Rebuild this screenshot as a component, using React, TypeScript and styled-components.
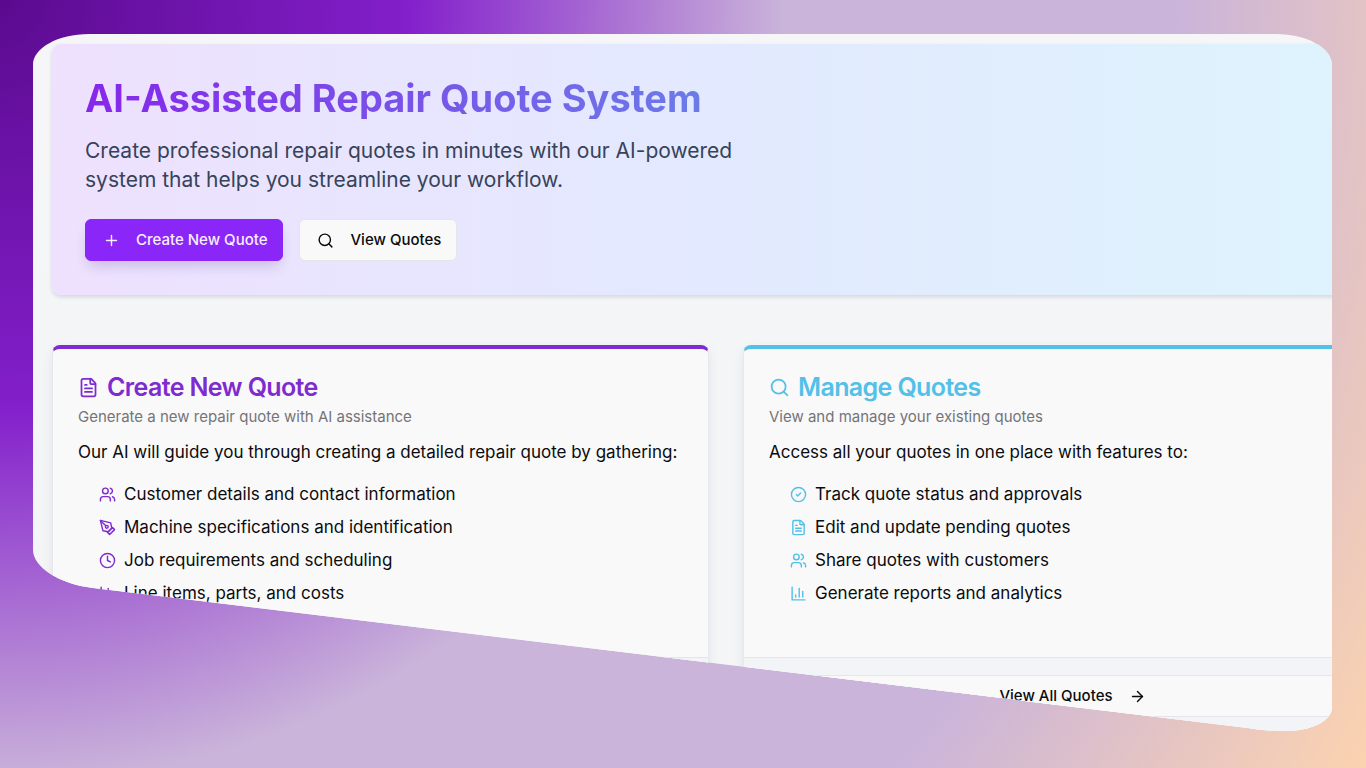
import React from "react";
import styled, { createGlobalStyle } from "styled-components";
import { ArrowRight, CircleCheck, Clock, FileText, Plus, Search, Users } from "lucide-react";

const violet = "#7e2bd0";
const sky = "#52c0e8";

const GlobalStyle = createGlobalStyle`
  *, *::before, *::after { box-sizing: border-box; }
  body {
    margin: 0;
    font-family: Inter, "Liberation Sans", sans-serif;
    font-size: 17px;
    line-height: 24px;
    color: #0b0b0d;
  }
  h1, h2, p, ul { margin: 0; }
`;

const Backdrop = styled.div`
  height: 100vh;
  display: flex;
  padding: 34px 34px 37px 33px;
  background: radial-gradient(
    circle farthest-corner at 0 0,
    #5b0a8f 0%,
    #831fcb 26%,
    #cab4da 50%,
    #cab4da 75%,
    #fcd3af 100%
  );
`;

const ClipDefs = styled.svg`
  position: absolute;
  width: 0;
  height: 0;
`;

const Panel = styled.main`
  flex: 1;
  min-width: 0;
  overflow: hidden;
  padding: 10px 0 0 19px;
  background: linear-gradient(#f6f6f8, #f3f5f7 50%, #f3f5f7 96%, #e9edf0);
  clip-path: url(#panel-shape);
`;

const Content = styled.div`
  display: flex;
  flex-direction: column;
  gap: 50px;
  margin-right: -68px;
`;

const Hero = styled.section`
  padding: 33px 33px 34px;
  border-radius: 9px;
  background: linear-gradient(90deg, #eee1fe 0%, #e2eafe 53%, #def4fd 100%);
  box-shadow: 0 2px 4px rgba(20, 20, 50, 0.14);
`;

const HeroTitle = styled.h1`
  width: fit-content;
  padding-right: 240px;
  font-size: 38px;
  line-height: 42px;
  font-weight: 700;
  background: linear-gradient(90deg, #8627ea, #6b7be8 72%);
  background-clip: text;
  color: transparent;
`;

const HeroText = styled.p`
  max-width: 700px;
  margin: 17px 0 25px;
  font-size: 21px;
  line-height: 29px;
  color: #36435a;
`;

const ButtonRow = styled.div`
  display: flex;
  gap: 16px;
`;

const Button = styled.button<{ $primary?: boolean; $wide?: boolean }>`
  display: flex;
  align-items: center;
  justify-content: center;
  gap: 16px;
  width: ${(p) => (p.$wide ? "100%" : "auto")};
  height: 42px;
  padding: 0 15px 0 17px;
  border: 1px solid ${(p) => (p.$primary ? "#8b26f8" : "#e4e6ea")};
  border-radius: 6px;
  background: ${(p) => (p.$primary ? "#8b26f8" : "#f9f9fa")};
  color: ${(p) => (p.$primary ? "#f9eefe" : "#0b0b0d")};
  box-shadow: ${(p) => (p.$primary ? "0 8px 14px -4px rgba(60, 30, 120, 0.22)" : "none")};
  font: 500 15px/20px Inter, "Liberation Sans", sans-serif;
  cursor: pointer;
`;

const Cards = styled.div`
  display: grid;
  grid-template-columns: 1fr 1fr;
  gap: 34px;
`;

const Card = styled.section<{ $accent: string }>`
  border: 1px solid #e7e8ec;
  border-top: 4px solid ${(p) => p.$accent};
  border-radius: 8px;
  background: #f9f9fa;
  box-shadow: 0 4px 12px rgba(20, 20, 50, 0.07);
`;

const CardBody = styled.div`
  height: 308px;
  padding: 25px;
`;

const CardTitle = styled.h2<{ $accent: string }>`
  display: flex;
  align-items: center;
  gap: 8px;
  font-size: 25px;
  line-height: 26px;
  font-weight: 600;
  letter-spacing: -0.025em;
  color: ${(p) => p.$accent};
`;

const Description = styled.p`
  margin: 7px 0 13px;
  font-size: 15px;
  line-height: 20px;
  color: #747478;
`;

const Features = styled.ul`
  display: grid;
  gap: 9px;
  margin-top: 18px;
  padding: 0 0 0 21px;
  list-style: none;
`;

const Feature = styled.li<{ $accent: string }>`
  display: flex;
  align-items: center;
  gap: 8px;

  svg { color: ${(p) => p.$accent}; }
`;

const CardFooter = styled.footer`
  padding: 17px 0;
  border-top: 1px solid #e3e5e9;
  border-radius: 0 0 8px 8px;
  background: #f3f4f7;
`;

type IconProps = { size?: number };

const strokeProps = {
  viewBox: "0 0 24 24",
  fill: "none",
  stroke: "currentColor",
  strokeWidth: 2,
  strokeLinecap: "round",
  strokeLinejoin: "round",
} as const;

function PenIcon({ size = 24 }: IconProps) {
  return (
    <svg width={size} height={size} aria-hidden="true" {...strokeProps}>
      <path d="m12 19 7-7 3 3-7 7-3-3z" />
      <path d="m18 13-1.5-7.5L2 2l3.5 14.5L13 18l5-5z" />
      <path d="m2 2 7.586 7.586" />
      <circle cx="11" cy="11" r="2" />
    </svg>
  );
}

function ChartIcon({ size = 24 }: IconProps) {
  return (
    <svg width={size} height={size} aria-hidden="true" {...strokeProps}>
      <path d="M3 3v18h18" />
      <path d="M18 17V9" />
      <path d="M13 17V5" />
      <path d="M8 17v-3" />
    </svg>
  );
}

type IconType = React.ComponentType<IconProps>;

type QuoteCardProps = {
  accent: string;
  icon: IconType;
  title: string;
  description: string;
  intro: string;
  items: [IconType, string][];
  action: string;
};

function QuoteCard({ accent, icon: Icon, title, description, intro, items, action }: QuoteCardProps) {
  return (
    <Card $accent={accent}>
      <CardBody>
        <CardTitle $accent={accent}>
          <Icon size={21} />
          {title}
        </CardTitle>
        <Description>{description}</Description>
        <p>{intro}</p>
        <Features>
          {items.map(([ItemIcon, label]) => (
            <Feature key={label} $accent={accent}>
              <ItemIcon size={17} />
              {label}
            </Feature>
          ))}
        </Features>
      </CardBody>
      <CardFooter>
        <Button $wide>
          {action}
          <ArrowRight size={17} />
        </Button>
      </CardFooter>
    </Card>
  );
}

export default function App() {
  return (
    <Backdrop>
      <GlobalStyle />
      <ClipDefs aria-hidden="true">
        <clipPath id="panel-shape" clipPathUnits="objectBoundingBox">
          <path
            transform={`scale(${1 / 1299} ${1 / 697})`}
            d="M0 31C0 14 25 0 56 0H1243C1274 0 1299 14 1299 31V673C1299 688 1276 697 1254 697C1238 697 1228 696 1215 694L60 554C26 550 0 533 0 516Z"
          />
        </clipPath>
      </ClipDefs>
      <Panel>
        <Content>
          <Hero>
            <HeroTitle>AI-Assisted Repair Quote System</HeroTitle>
            <HeroText>
              Create professional repair quotes in minutes with our AI-powered system that helps you
              streamline your workflow.
            </HeroText>
            <ButtonRow>
              <Button $primary>
                <Plus size={17} />
                Create New Quote
              </Button>
              <Button>
                <Search size={17} />
                View Quotes
              </Button>
            </ButtonRow>
          </Hero>
          <Cards>
            <QuoteCard
              accent={violet}
              icon={FileText}
              title="Create New Quote"
              description="Generate a new repair quote with AI assistance"
              intro="Our AI will guide you through creating a detailed repair quote by gathering:"
              items={[
                [Users, "Customer details and contact information"],
                [PenIcon, "Machine specifications and identification"],
                [Clock, "Job requirements and scheduling"],
                [ChartIcon, "Line items, parts, and costs"],
              ]}
              action="Start New Quote"
            />
            <QuoteCard
              accent={sky}
              icon={Search}
              title="Manage Quotes"
              description="View and manage your existing quotes"
              intro="Access all your quotes in one place with features to:"
              items={[
                [CircleCheck, "Track quote status and approvals"],
                [FileText, "Edit and update pending quotes"],
                [Users, "Share quotes with customers"],
                [ChartIcon, "Generate reports and analytics"],
              ]}
              action="View All Quotes"
            />
          </Cards>
        </Content>
      </Panel>
    </Backdrop>
  );
}
